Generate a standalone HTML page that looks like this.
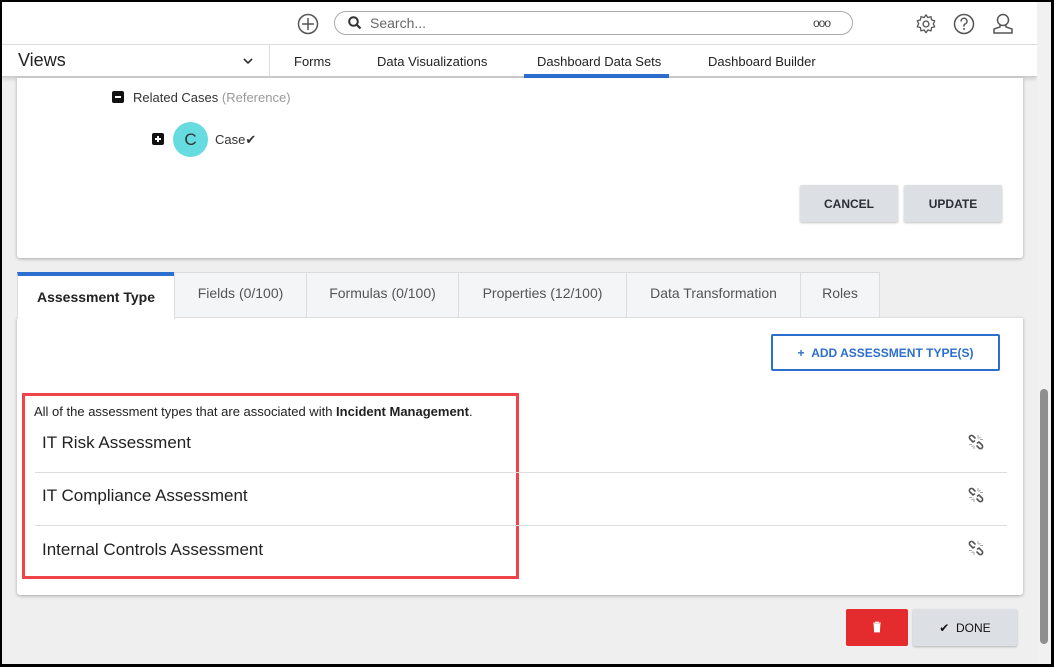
<!DOCTYPE html>
<html><head><style>
*{box-sizing:border-box;margin:0;padding:0}
body{width:1054px;height:667px;background:#000;font-family:"Liberation Sans",sans-serif;position:relative;overflow:hidden}
.a{position:absolute}
#page{left:2px;top:2px;width:1049px;height:662px;background:#efefef;overflow:hidden}
.btn{position:absolute;background:#dcdfe3;border-radius:2px;box-shadow:0 1px 2px rgba(0,0,0,.25);font-size:12px;font-weight:bold;color:#2b2f36;display:flex;align-items:center;justify-content:center}
.tab{position:absolute;top:270px;height:46px;background:#f4f5f7;border:1px solid #dcdcdc;font-size:14px;color:#555;display:flex;align-items:center;justify-content:center;padding-bottom:4px}
.row{position:absolute;left:33px;width:972px;height:53px;border-bottom:1px solid #ddd;font-size:17px;color:#222;padding-left:7px;display:flex;align-items:center;padding-bottom:6px}
</style></head><body>
<div id="page" class="a">
 <div class="a" style="left:0;top:0;width:1035px;height:75px;background:#fff;border-bottom:1px solid #ccc;box-shadow:0 2px 4px rgba(0,0,0,.15)"></div>
 <div class="a" style="left:0;top:42px;width:1035px;height:1px;background:#ddd"></div>
 <svg class="a" style="left:295px;top:11px" width="22" height="22" viewBox="0 0 22 22"><circle cx="11" cy="11" r="9.5" fill="none" stroke="#555" stroke-width="1.5"/><path d="M11 5v12M5 11h12" stroke="#555" stroke-width="1.5"/></svg>
 <div class="a" style="left:332px;top:9px;width:519px;height:24px;border:1px solid #aaa;border-radius:12px"></div>
 <svg class="a" style="left:346px;top:14px" width="14" height="14" viewBox="0 0 14 14"><circle cx="5.5" cy="5.5" r="4.3" fill="none" stroke="#333" stroke-width="2"/><path d="M8.5 8.5l4 4" stroke="#333" stroke-width="2.2"/></svg>
 <div class="a" style="left:368px;top:13px;font-size:14px;color:#666">Search...</div>
 <div class="a" style="left:811px;top:14px;font-size:12px;color:#444;letter-spacing:-1px">ooo</div>
 <svg class="a" style="left:913px;top:11px" width="22" height="22" viewBox="0 0 24 24"><circle cx="12" cy="12" r="3.2" fill="none" stroke="#555" stroke-width="1.5"/><path d="M12 2l2 3 3.5-1 .5 3.5 3.5 1-1.5 3.5 1.5 3-3.5 1-.5 3.5-3.5-1-2 3-2-3-3.5 1-.5-3.5-3.5-1 1.5-3.5-1.5-3 3.5-1 .5-3.5 3.5 1z" fill="none" stroke="#555" stroke-width="1.4" stroke-linejoin="round"/></svg>
 <svg class="a" style="left:951px;top:11px" width="22" height="22" viewBox="0 0 22 22"><circle cx="11" cy="11" r="9.5" fill="none" stroke="#555" stroke-width="1.5"/><path d="M8 8.5a3 3 0 1 1 4 2.6c-.8.4-1 1-1 2v.5" fill="none" stroke="#555" stroke-width="1.5"/><circle cx="11" cy="16" r="1" fill="#555"/></svg>
 <svg class="a" style="left:989px;top:10px" width="24" height="24" viewBox="0 0 24 24"><circle cx="12" cy="8" r="5.5" fill="none" stroke="#555" stroke-width="1.5"/><path d="M9 13v2l-6 2v4h18v-4l-6-2v-2" fill="none" stroke="#555" stroke-width="1.5"/></svg>
 <div class="a" style="left:16px;top:48px;font-size:18px;color:#222">Views</div>
 <svg class="a" style="left:241px;top:55px" width="10" height="8" viewBox="0 0 10 8"><path d="M1 2l4 4 4-4" fill="none" stroke="#333" stroke-width="1.6"/></svg>
 <div class="a" style="left:267px;top:43px;width:1px;height:32px;background:#ddd"></div>
 <div class="a" style="left:292px;top:52px;font-size:13px;color:#222">Forms</div>
 <div class="a" style="left:375px;top:52px;font-size:13px;color:#222">Data Visualizations</div>
 <div class="a" style="left:535px;top:52px;font-size:13px;color:#222">Dashboard Data Sets</div>
 <div class="a" style="left:522px;top:72px;width:145px;height:4px;background:#2d6fce"></div>
 <div class="a" style="left:706px;top:52px;font-size:13px;color:#222">Dashboard Builder</div>
 <div class="a" style="left:15px;top:76px;width:1006px;height:180px;background:#fff;border-radius:0 0 3px 3px;box-shadow:0 1px 3px rgba(0,0,0,.3)"></div>
 <div class="a" style="left:110px;top:89px;width:12px;height:12px;background:#111;border-radius:2px"><div class="a" style="left:3px;top:5px;width:6px;height:2px;background:#fff"></div></div>
 <div class="a" style="left:131px;top:88px;font-size:13px;color:#333">Related Cases <span style="color:#999">(Reference)</span></div>
 <div class="a" style="left:150px;top:131px;width:12px;height:12px;background:#111;border-radius:2px"><div class="a" style="left:3px;top:5px;width:6px;height:2px;background:#fff"></div><div class="a" style="left:5px;top:3px;width:2px;height:6px;background:#fff"></div></div>
 <div class="a" style="left:171px;top:120px;width:35px;height:35px;border-radius:50%;background:#66dbe0;font-size:17px;color:#333;text-align:center;line-height:35px">C</div>
 <div class="a" style="left:213px;top:130px;font-size:13px;color:#333">Case&#10004;</div>
 <div class="btn" style="left:798px;top:183px;width:98px;height:37px">CANCEL</div>
 <div class="btn" style="left:902px;top:183px;width:98px;height:37px">UPDATE</div>
 <div class="a" style="left:15px;top:316px;width:1006px;height:277px;background:#fff;border-radius:0 0 3px 3px;box-shadow:0 1px 3px rgba(0,0,0,.3)"></div>
 <div class="tab" style="left:15px;width:158px;background:#fff;border-bottom:none;border-top:4px solid #2d6fce;color:#222;font-weight:bold;height:47px;padding-bottom:2px">Assessment Type</div>
 <div class="tab" style="left:172px;width:133px">Fields (0/100)</div>
 <div class="tab" style="left:304px;width:153px">Formulas (0/100)</div>
 <div class="tab" style="left:456px;width:169px">Properties (12/100)</div>
 <div class="tab" style="left:624px;width:175px">Data Transformation</div>
 <div class="tab" style="left:798px;width:80px">Roles</div>
 <div class="a" style="left:769px;top:332px;width:229px;height:37px;border:2px solid #2d6fce;border-radius:2px;color:#2d6fce;font-size:12px;font-weight:bold;display:flex;align-items:center;justify-content:center">+&nbsp;&nbsp;ADD ASSESSMENT TYPE(S)</div>
 <div class="a" style="left:20px;top:391px;width:497px;height:186px;border:3px solid #f0434a"></div>
 <div class="a" style="left:32px;top:402px;font-size:13px;color:#222">All of the assessment types that are associated with <b>Incident Management</b>.</div>
 <div class="row" style="top:418px">IT Risk Assessment</div>
 <div class="row" style="top:471px">IT Compliance Assessment</div>
 <div class="row" style="top:524px;border-bottom:none">Internal Controls Assessment</div>
 <svg class="a" style="left:966px;top:432px" width="16" height="16" viewBox="0 0 16 16"><g fill="none" stroke="#555" stroke-width="1.6" stroke-linecap="round"><path d="M7 4L5 2a2 2 0 0 0-3 3l3 3 1.5-1"/><path d="M9 12l2 2a2 2 0 0 0 3-3l-3-3-1.5 1"/></g><g stroke="#aaa" stroke-width="1"><path d="M10 1v3M12.5 3l-2 1.5M15 5.5h-3M1 10.5h3M3.5 13l2-1.5M6 15v-3"/></g></svg>
 <svg class="a" style="left:966px;top:485px" width="16" height="16" viewBox="0 0 16 16"><g fill="none" stroke="#555" stroke-width="1.6" stroke-linecap="round"><path d="M7 4L5 2a2 2 0 0 0-3 3l3 3 1.5-1"/><path d="M9 12l2 2a2 2 0 0 0 3-3l-3-3-1.5 1"/></g><g stroke="#aaa" stroke-width="1"><path d="M10 1v3M12.5 3l-2 1.5M15 5.5h-3M1 10.5h3M3.5 13l2-1.5M6 15v-3"/></g></svg>
 <svg class="a" style="left:966px;top:538px" width="16" height="16" viewBox="0 0 16 16"><g fill="none" stroke="#555" stroke-width="1.6" stroke-linecap="round"><path d="M7 4L5 2a2 2 0 0 0-3 3l3 3 1.5-1"/><path d="M9 12l2 2a2 2 0 0 0 3-3l-3-3-1.5 1"/></g><g stroke="#aaa" stroke-width="1"><path d="M10 1v3M12.5 3l-2 1.5M15 5.5h-3M1 10.5h3M3.5 13l2-1.5M6 15v-3"/></g></svg>
 <div class="a" style="left:844px;top:607px;width:62px;height:37px;background:#e42b2e;border-radius:2px"></div>
 <svg class="a" style="left:870px;top:619px" width="10" height="12" viewBox="0 0 10 12"><path d="M1 2h8M3.5 2V1h3v1M2 3h6l-.5 8h-5z" fill="#fff" stroke="#fff" stroke-width=".8"/></svg>
 <div class="btn" style="left:911px;top:607px;width:104px;height:37px;font-weight:normal;font-size:12px;color:#111">&#10004;&nbsp;&nbsp;DONE</div>
 <div class="a" style="left:1035px;top:0;width:14px;height:662px;background:#f1f1f1"></div>
 <div class="a" style="left:1038px;top:387px;width:8px;height:255px;background:#8f8f8f;border-radius:4px"></div>
</div>
</body></html>
